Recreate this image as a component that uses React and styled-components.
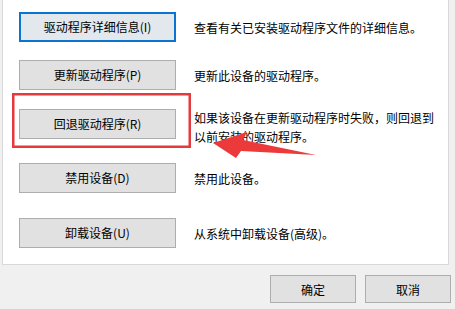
import React from "react";
import styled, { createGlobalStyle } from "styled-components";

const GlobalStyle = createGlobalStyle`
  html, body {
    margin: 0;
    padding: 0;
    background: #f0f0f0;
    font-family: "Noto Sans CJK SC", "Noto Sans", sans-serif;
    font-size: 12px;
    color: #000;
  }
`;

const Window = styled.div`
  position: relative;
  width: 455px;
  height: 309px;
  overflow: hidden;
  background: #f0f0f0;
`;

const Panel = styled.div`
  box-sizing: border-box;
  width: 447px;
  margin: -1px 0 0 2px;
  padding: 0 0 16px 16px;
  background: #fff;
  border: 1px solid #d9d9d9;
  display: flex;
  flex-direction: column;
`;

const Row = styled.div`
  display: flex;
  align-items: center;
  gap: 18px;
  height: 30px;
  margin-top: ${(props) => props.$top}px;
`;

const ActionButton = styled.button`
  box-sizing: border-box;
  flex: none;
  width: 157px;
  height: 30px;
  padding: 0;
  font-family: inherit;
  font-size: 12px;
  line-height: 1;
  color: #000;
  background: ${(props) => (props.$focused ? "#e3e8ec" : "#e1e1e1")};
  border: ${(props) =>
    props.$focused ? "2px solid #0a74d0" : "1px solid #adadad"};
`;

const Description = styled.div`
  width: 242px;
  line-height: 19px;
  margin-top: ${(props) => props.$shift || 0}px;
`;

const Footer = styled.div`
  display: flex;
  justify-content: flex-end;
  gap: 9px;
  margin-top: 10px;
  padding-right: 4px;
`;

const DialogButton = styled.button`
  box-sizing: border-box;
  width: 86px;
  height: 28px;
  padding: 0;
  font-family: inherit;
  font-size: 12px;
  color: #000;
  background: #e1e1e1;
  border: 1px solid #adadad;
`;

const Annotation = styled.svg`
  position: absolute;
  left: 0;
  top: 0;
  pointer-events: none;
`;

const actions = [
  { top: 12, label: "驱动程序详细信息(I)", text: "查看有关已安装驱动程序文件的详细信息。", focused: true },
  { top: 18, label: "更新驱动程序(P)", text: "更新此设备的驱动程序。" },
  { top: 19, label: "回退驱动程序(R)", text: "如果该设备在更新驱动程序时失败，则回退到以前安装的驱动程序。", shift: 6 },
  { top: 24, label: "禁用设备(D)", text: "禁用此设备。" },
  { top: 25, label: "卸载设备(U)", text: "从系统中卸载设备(高级)。" },
];

export default function App() {
  return (
    <Window>
      <GlobalStyle />
      <Panel>
        {actions.map((a) => (
          <Row key={a.label} $top={a.top}>
            <ActionButton $focused={a.focused}>{a.label}</ActionButton>
            <Description $shift={a.shift}>{a.text}</Description>
          </Row>
        ))}
      </Panel>
      <Footer>
        <DialogButton>确定</DialogButton>
        <DialogButton>取消</DialogButton>
      </Footer>

      {/* red highlight + arrow drawn over the screenshot */}
      <Annotation width="455" height="309" viewBox="0 0 455 309">
        <rect
          x="13.25"
          y="94.25"
          width="176.5"
          height="52.5"
          fill="none"
          stroke="#e5393b"
          strokeWidth="2.5"
        />
        <polygon
          points="213,143 247,132 243,140 316,155 241,151 236,158"
          fill="#ec3a3b"
        />
      </Annotation>
    </Window>
  );
}
